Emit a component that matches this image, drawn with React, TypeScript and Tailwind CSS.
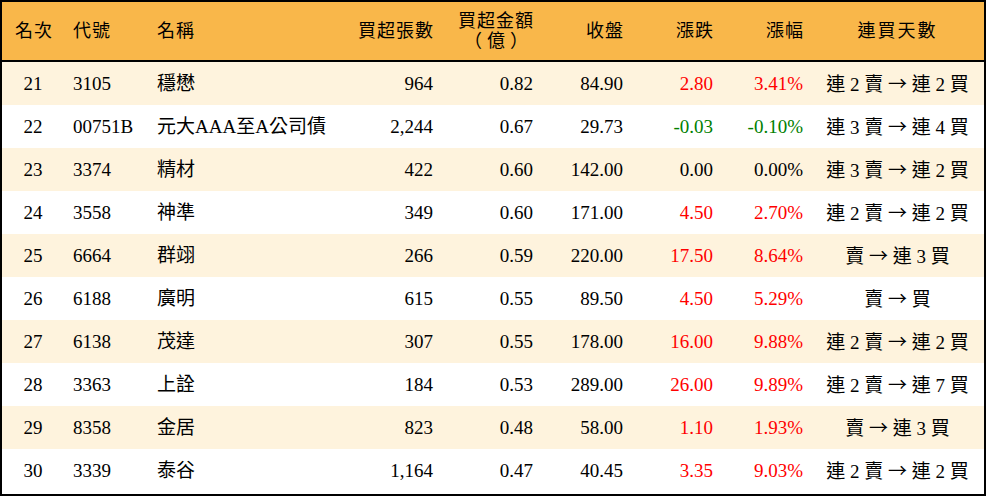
import React from 'react'

type Row = {
    rank: number
    code: string
    name: string
    lots: string
    amount: string
    close: string
    change: string
    pct: string
    from: string
    to: string
}

const rows: Row[] = [
    { rank: 21, code: '3105', name: '穩懋', lots: '964', amount: '0.82', close: '84.90', change: '2.80', pct: '3.41%', from: '連 2 賣', to: '連 2 買' },
    { rank: 22, code: '00751B', name: '元大AAA至A公司債', lots: '2,244', amount: '0.67', close: '29.73', change: '-0.03', pct: '-0.10%', from: '連 3 賣', to: '連 4 買' },
    { rank: 23, code: '3374', name: '精材', lots: '422', amount: '0.60', close: '142.00', change: '0.00', pct: '0.00%', from: '連 3 賣', to: '連 2 買' },
    { rank: 24, code: '3558', name: '神準', lots: '349', amount: '0.60', close: '171.00', change: '4.50', pct: '2.70%', from: '連 2 賣', to: '連 2 買' },
    { rank: 25, code: '6664', name: '群翊', lots: '266', amount: '0.59', close: '220.00', change: '17.50', pct: '8.64%', from: '賣', to: '連 3 買' },
    { rank: 26, code: '6188', name: '廣明', lots: '615', amount: '0.55', close: '89.50', change: '4.50', pct: '5.29%', from: '賣', to: '買' },
    { rank: 27, code: '6138', name: '茂達', lots: '307', amount: '0.55', close: '178.00', change: '16.00', pct: '9.88%', from: '連 2 賣', to: '連 2 買' },
    { rank: 28, code: '3363', name: '上詮', lots: '184', amount: '0.53', close: '289.00', change: '26.00', pct: '9.89%', from: '連 2 賣', to: '連 7 買' },
    { rank: 29, code: '8358', name: '金居', lots: '823', amount: '0.48', close: '58.00', change: '1.10', pct: '1.93%', from: '賣', to: '連 3 買' },
    { rank: 30, code: '3339', name: '泰谷', lots: '1,164', amount: '0.47', close: '40.45', change: '3.35', pct: '9.03%', from: '連 2 賣', to: '連 2 買' },
]

// color by sign of the change
const tone = (v: string) => {
    const n = parseFloat(v)
    if (n > 0) return 'text-[#ff0000]'
    if (n < 0) return 'text-[#008000]'
    return 'text-black'
}

export default function App() {
    return (
        <div
            className="w-[986px] h-[496px] border-2 border-black bg-white text-black overflow-hidden"
            style={{ fontFamily: '"Liberation Serif", "Noto Sans CJK TC", serif' }}
        >
            <table className="w-[982px] table-fixed border-separate border-spacing-0 text-[19px] leading-none">
                <colgroup>
                    <col className="w-[62px]" />
                    <col className="w-[84px]" />
                    <col className="w-[200px]" />
                    <col className="w-[93px]" />
                    <col className="w-[100px]" />
                    <col className="w-[90px]" />
                    <col className="w-[90px]" />
                    <col className="w-[90px]" />
                    <col className="w-[173px]" />
                </colgroup>
                <thead>
                    {/* Header */}
                    <tr className="h-[60px] bg-[#f9b74a] text-[18px] font-normal">
                        <th className="border-b-2 border-black text-center font-normal pl-[2px] tracking-[1px]">名次</th>
                        <th className="border-b-2 border-black text-left font-normal pl-[9px] tracking-[1px]">代號</th>
                        <th className="border-b-2 border-black text-left font-normal pl-[9px] tracking-[1px]">名稱</th>
                        <th className="border-b-2 border-black text-right font-normal pr-[7px] tracking-[1px]">買超張數</th>
                        <th className="border-b-2 border-black text-right font-normal pr-[7px]">
                            <span className="inline-flex flex-col items-center gap-[2px] tracking-[1px]">
                                <span>買超金額</span>
                                <span className="tracking-[5px] pl-[5px]">（億）</span>
                            </span>
                        </th>
                        <th className="border-b-2 border-black text-right font-normal pr-[7px] tracking-[1px]">收盤</th>
                        <th className="border-b-2 border-black text-right font-normal pr-[7px] tracking-[1px]">漲跌</th>
                        <th className="border-b-2 border-black text-right font-normal pr-[7px] tracking-[1px]">漲幅</th>
                        <th className="border-b-2 border-black text-center font-normal tracking-[2px]">連買天數</th>
                    </tr>
                </thead>
                <tbody>
                    {rows.map((r, i) => (
                        <tr key={r.rank} className={`h-[43px] ${i % 2 === 0 ? 'bg-[#fef3dd]' : 'bg-white'}`}>
                            <td className="text-center">{r.rank}</td>
                            <td className="text-left pl-[9px]">{r.code}</td>
                            <td className="text-left pl-[9px] whitespace-nowrap">{r.name}</td>
                            <td className="text-right pr-[8px]">{r.lots}</td>
                            <td className="text-right pr-[8px]">{r.amount}</td>
                            <td className="text-right pr-[8px]">{r.close}</td>
                            <td className={`text-right pr-[8px] ${tone(r.change)}`}>{r.change}</td>
                            <td className={`text-right pr-[8px] ${tone(r.change)}`}>{r.pct}</td>
                            <td className="text-center whitespace-pre">
                                {r.from}{' '}
                                <span style={{ fontFamily: '"Noto Sans CJK TC", sans-serif' }}>→</span>
                                {' '}{r.to}
                            </td>
                        </tr>
                    ))}
                </tbody>
            </table>
        </div>
    )
}
